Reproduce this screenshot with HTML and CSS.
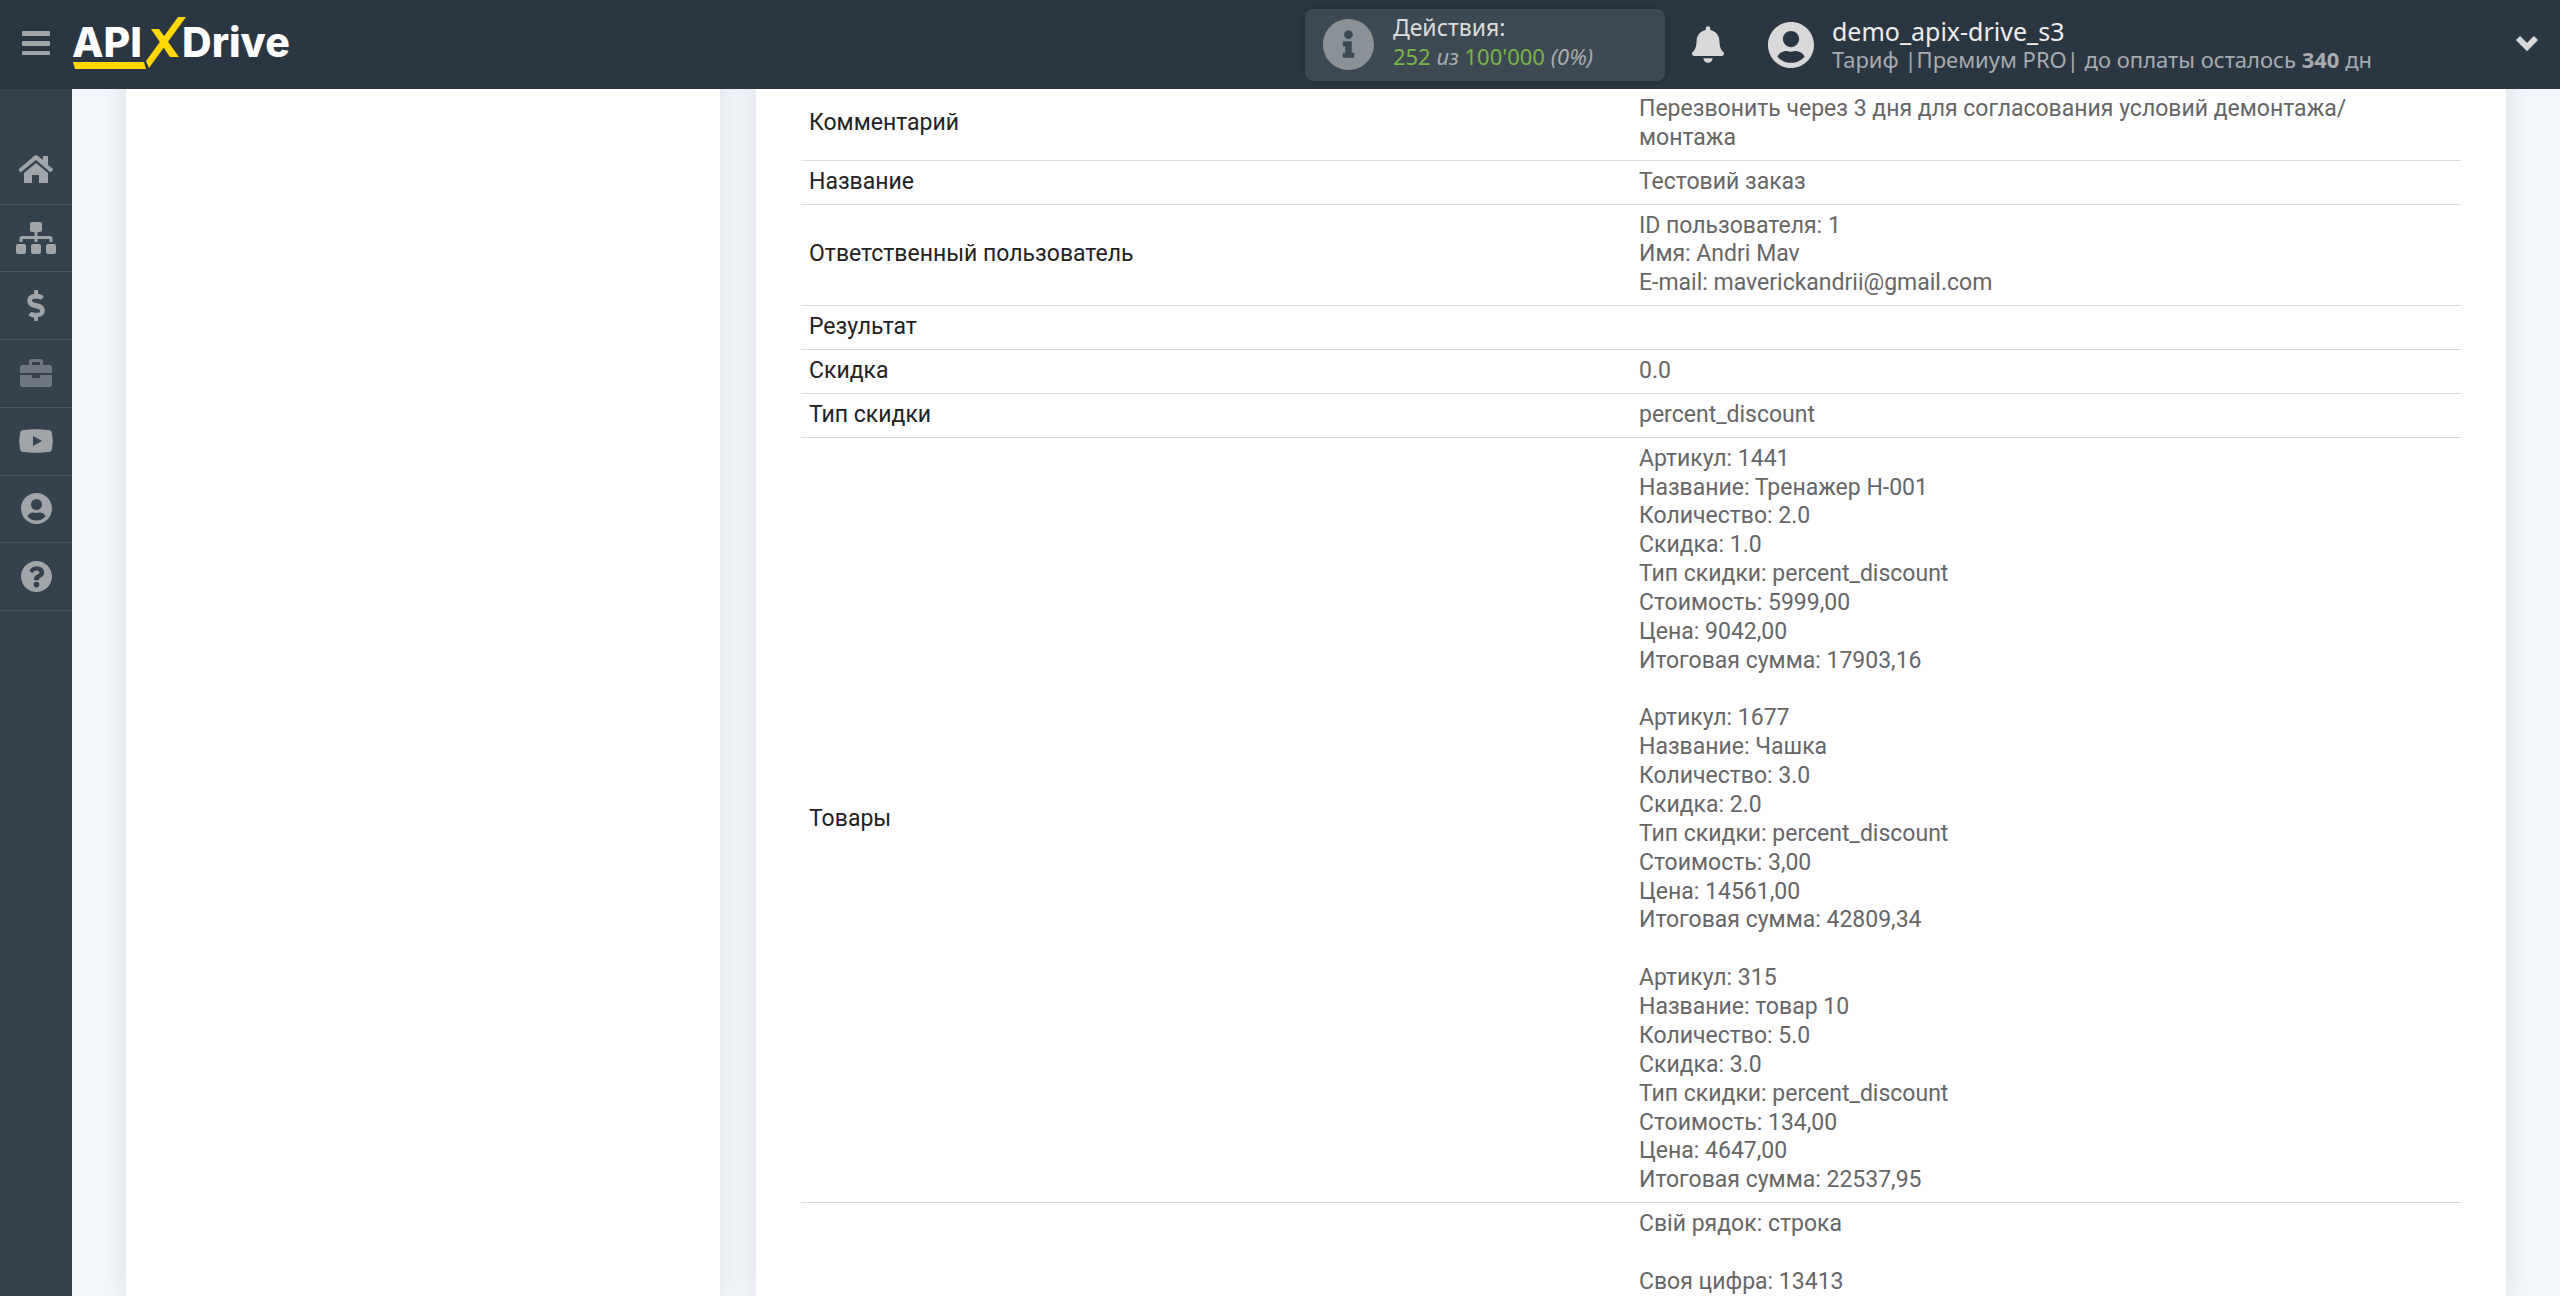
FILE: index.html
```html
<!DOCTYPE html>
<html lang="ru">
<head>
<meta charset="utf-8">
<title>ApiX-Drive</title>
<link rel="stylesheet" href="styles.css">
</head>
<body>
<header class="topbar">
  <button class="menu-toggle" type="button" aria-label="Меню"><svg width="28" height="24" viewBox="0 0 28 24"><rect width="28" height="5" rx="1"/><rect y="10" width="28" height="5" rx="1"/><rect y="20" width="28" height="4" rx="1"/></svg></button>
  <a class="logo" href="#" aria-label="APIXDrive">
    <svg width="226" height="56" viewBox="0 0 226 56">
      <text class="logo-text" x="0" y="42">API</text>
      <text class="logo-text" x="110" y="42">Drive</text>
      <path class="logo-mark" d="M1 47h71l2 7H3zM79 14h8l20 28h-9zM106 2h8L77 53l-3-7z"/>
    </svg>
  </a>
  <a class="actions" href="#">
    <svg class="actions-icon" width="51" height="51" viewBox="8 8 496 496"><path d="M256 8C119 8 8 119 8 256s111 248 248 248 248-111 248-248S393 8 256 8zm0 110a42 42 0 1 1 0 84 42 42 0 0 1 0-84zm56 254c0 7-5 12-12 12h-88c-7 0-12-5-12-12v-24c0-7 5-12 12-12h12v-64h-12c-7 0-12-5-12-12v-24c0-7 5-12 12-12h64c7 0 12 5 12 12v100h12c7 0 12 5 12 12z"/></svg>
    <span class="actions-text">
      <span class="actions-title">Действия:</span>
      <span class="actions-count"><b>252</b> <i>из</i> <b>100'000</b> <i>(0%)</i></span>
    </span>
  </a>
  <button class="bell" type="button" aria-label="Уведомления"><svg width="32" height="37" viewBox="0 0 448 512"><path d="M224 512c35 0 64-29 64-64H160c0 35 29 64 64 64zm215-150c-19-20-55-51-55-154 0-77-54-139-128-154V32a32 32 0 1 0-64 0v22C118 69 64 131 64 208c0 103-36 134-55 154-6 6-9 14-9 22 0 16 13 32 32 32h384c19 0 32-16 32-32 0-8-3-16-9-22z"/></svg></button>
  <a class="account" href="#">
    <svg width="46" height="46" viewBox="0 8 496 496"><path d="M248 8C111 8 0 119 0 256s111 248 248 248 248-111 248-248S385 8 248 8zm0 96a88 88 0 1 1 0 176 88 88 0 0 1 0-176zm0 344c-59 0-111-27-147-69 19-35 56-59 99-59 2 0 5 0 7 1 13 4 27 7 41 7s28-3 41-7c2-1 5-1 7-1 43 0 80 24 99 59-36 42-88 69-147 69z"/></svg>
    <span class="account-text">
      <span class="account-name">demo_apix-drive_s3</span>
      <span class="account-plan">Тариф |Премиум PRO| до оплаты осталось <b>340</b> дн</span>
    </span>
  </a>
  <button class="expand" type="button" aria-label="Развернуть"><svg width="24" height="16" viewBox="0 0 24 16"><path d="M3 3l9 9 9-9"/></svg></button>
</header>
<div class="page">
  <nav class="sidebar" aria-label="Разделы">
    <ul class="side-list">
      <li><a href="#" aria-label="Главная"><svg width="36" height="30" viewBox="0 0 36 30"><path d="M18 8L6 18v9c0 1 0 1 1 1h7v-8h7v8h8c1 0 1 0 1-1v-9z"/><path d="M35 14l-5-4V1h-5v4l-5-4c-1-1-3-1-4 0L1 14c-1 1 0 1 0 1l1 2h1L18 5l14 12h1l2-2z"/></svg></a></li>
      <li><a href="#" aria-label="Связи"><svg width="40" height="32" viewBox="0 0 640 512"><path d="M128 352H32c-18 0-32 14-32 32v96c0 18 14 32 32 32h96c18 0 32-14 32-32v-96c0-18-14-32-32-32zm-24-80h192v48h48v-48h192v48h48v-57c0-21-17-39-39-39H344v-64h40c18 0 32-14 32-32V32c0-18-14-32-32-32H256c-18 0-32 14-32 32v96c0 18 14 32 32 32h40v64H95c-22 0-39 18-39 39v57h48zm264 80h-96c-18 0-32 14-32 32v96c0 18 14 32 32 32h96c18 0 32-14 32-32v-96c0-18-14-32-32-32zm240 0h-96c-18 0-32 14-32 32v96c0 18 14 32 32 32h96c18 0 32-14 32-32v-96c0-18-14-32-32-32z"/></svg></a></li>
      <li><a href="#" aria-label="Оплата"><svg width="18" height="31" viewBox="0 0 288 512"><path d="M209 233l-108-31c-13-4-21-16-21-29 0-16 13-29 30-29h66c12 0 24 4 34 11 6 4 14 3 20-2l35-34c7-7 6-18-2-24-24-19-54-30-85-30V16c0-9-7-16-16-16h-32c-9 0-16 7-16 16v48h-2C47 64-6 121 1 188c4 47 41 86 86 99l103 30c12 4 21 16 21 29 0 16-13 30-30 30h-66c-12 0-24-4-34-11-6-4-14-3-20 2l-35 34c-7 7-6 18 2 24 24 19 54 30 85 30v41c0 9 7 16 16 16h32c9 0 16-7 16-16v-49c47-1 90-28 106-72 22-61-15-125-74-142z"/></svg></a></li>
      <li class="dim"><a href="#" aria-label="Кейсы"><svg width="32" height="29" viewBox="0 0 32 29"><path d="M29 6h-6V3c0-2-1-3-3-3h-8c-2 0-3 1-3 3v3H3C1 6 0 7 0 9v5h32V9c0-2-1-3-3-3zM20 6h-8V3h8zM20 18c0 1 0 1-1 1h-6c-1 0-1 0-1-1v-2H0v9c0 2 1 3 3 3h26c2 0 3-1 3-3v-9H20z"/></svg></a></li>
      <li><a href="#" aria-label="Видео"><svg width="34" height="24" viewBox="0 0 34 24"><path d="M5 1C12 0 22 0 29 1c3 0 4 2 4 4 1 5 1 9 0 14 0 2-1 4-4 4-7 1-17 1-24 0-3 0-4-2-4-4-1-5-1-9 0-14 0-2 1-4 4-4zM14 7v10l9-5z"/></svg></a></li>
      <li><a href="#" aria-label="Профиль"><svg width="31" height="31" viewBox="0 8 496 496"><path d="M248 8C111 8 0 119 0 256s111 248 248 248 248-111 248-248S385 8 248 8zm0 96a88 88 0 1 1 0 176 88 88 0 0 1 0-176zm0 344c-59 0-111-27-147-69 19-35 56-59 99-59 2 0 5 0 7 1 13 4 27 7 41 7s28-3 41-7c2-1 5-1 7-1 43 0 80 24 99 59-36 42-88 69-147 69z"/></svg></a></li>
      <li><a href="#" aria-label="Помощь"><svg width="31" height="31" viewBox="8 8 496 496"><path d="M504 256c0 137-111 248-248 248S8 393 8 256 119 8 256 8s248 111 248 248zM263 90c-55 0-89 23-117 64-3 5-2 12 3 16l35 26c5 4 12 3 16-2 18-23 30-36 57-36 20 0 46 13 46 33 0 15-13 23-33 34-24 13-55 30-55 71v8c0 7 5 12 12 12h58c7 0 12-5 12-12v-5c0-28 83-29 83-106 0-58-60-103-117-103zm-7 248a46 46 0 1 0 0 92 46 46 0 0 0 0-92z"/></svg></a></li>
    </ul>
  </nav>
  <main class="content">
    <section class="card"></section>
    <section class="card card-data">
      <table class="data">
        <tbody>
        <tr><th scope="row">Комментарий</th><td>Перезвонить через 3 дня для согласования условий демонтажа/<br>монтажа</td></tr>
        <tr><th scope="row">Название</th><td>Тестовий заказ</td></tr>
        <tr><th scope="row">Ответственный пользователь</th><td>ID пользователя: 1<br>Имя: Andri Mav<br>E-mail: maverickandrii@gmail.com</td></tr>
        <tr><th scope="row">Результат</th><td></td></tr>
        <tr><th scope="row">Скидка</th><td>0.0</td></tr>
        <tr><th scope="row">Тип скидки</th><td>percent_discount</td></tr>
        <tr><th scope="row">Товары</th><td>Артикул: 1441<br>Название: Тренажер Н-001<br>Количество: 2.0<br>Скидка: 1.0<br>Тип скидки: percent_discount<br>Стоимость: 5999,00<br>Цена: 9042,00<br>Итоговая сумма: 17903,16<br><br>Артикул: 1677<br>Название: Чашка<br>Количество: 3.0<br>Скидка: 2.0<br>Тип скидки: percent_discount<br>Стоимость: 3,00<br>Цена: 14561,00<br>Итоговая сумма: 42809,34<br><br>Артикул: 315<br>Название: товар 10<br>Количество: 5.0<br>Скидка: 3.0<br>Тип скидки: percent_discount<br>Стоимость: 134,00<br>Цена: 4647,00<br>Итоговая сумма: 22537,95</td></tr>
        <tr><th scope="row"></th><td>Свій рядок: строка<br><br>Своя цифра: 13413</td></tr>
        </tbody>
      </table>
    </section>
  </main>
</div>
</body>
</html>
```
FILE: styles.css
```css
* { box-sizing: border-box; }
body {
  margin: 0;
  background: #f4f7fc;
  color: #666;
  font-family: Roboto, sans-serif;
  font-size: 23px;
  line-height: 1.255;
}
button { margin: 0; padding: 0; border: 0; background: none; display: flex; cursor: pointer; }
a { color: inherit; text-decoration: none; }
svg { display: block; }

.topbar {
  position: fixed;
  inset: 0 0 auto 0;
  z-index: 2;
  display: flex;
  align-items: center;
  height: 89px;
  padding: 0 21px 0 22px;
  background: #2b3643;
  font-family: "Noto Sans", sans-serif;
  fill: #d9d9d9;
}
.menu-toggle { fill: #a0a5a9; margin: 0 22px 4px 0; }
.logo { margin-bottom: 4px; }
.logo-text { font: 800 41px Inter, sans-serif; fill: #fff; }
.logo-mark { fill: #ffd900; }

.actions {
  display: flex;
  align-items: center;
  gap: 19px;
  width: 360px;
  height: 72px;
  margin-left: auto;
  padding: 0 18px;
  border-radius: 8px;
  background: #3c4952;
  box-shadow: 0 0 8px rgba(0, 0, 0, .15);
}
.actions-icon { fill: #8a9197; }
.actions-text { display: flex; flex-direction: column; padding-bottom: 6px; line-height: 29px; font-size: 22px; }
.actions-title { color: #ddd; font-size: 23px; }
.actions-count { color: #a7acb0; }
.actions-count b { color: #7ab648; font-weight: 400; }
.bell { margin: 0 44px 0 27px; }

.account { display: flex; align-items: center; gap: 18px; white-space: nowrap; }
.account-text { display: flex; flex-direction: column; line-height: 28px; }
.account-name { color: #eee; font-size: 25px; }
.account-plan { color: #a7acb0; font-size: 22px; }
.expand { margin: 0 0 4px 143px; }
.expand path { fill: none; stroke: #d9d9d9; stroke-width: 6; }

.page { display: flex; min-height: 100vh; }
.sidebar { flex: 0 0 72px; padding-top: 137px; background: #36414e; fill: #a0a5a9; }
.side-list {
  display: grid;
  grid-auto-rows: 1fr;
  height: 474px;
  margin: 0;
  padding: 0;
  list-style: none;
}
.side-list li { border-bottom: 1px solid #4a5662; }
.side-list a { display: flex; align-items: center; justify-content: center; height: 100%; }
.side-list .dim { fill: #6e7780; }

.content {
  flex: 1;
  display: grid;
  grid-template-columns: 594fr 1750fr;
  gap: 36px;
  padding: 0 54px;
}
.card { background: #fff; box-shadow: 0 0 30px rgba(0, 0, 0, .1); }
.card-data { padding: 88px 45px 0; }

.data { width: 100%; table-layout: fixed; border-collapse: collapse; }
.data th, .data td { padding: 7px 8px; border-bottom: 1px solid #ddd; text-align: left; vertical-align: middle; font-weight: 400; }
.data th { color: #222; }
.data tr:last-child > * { border-bottom: 0; }
```
